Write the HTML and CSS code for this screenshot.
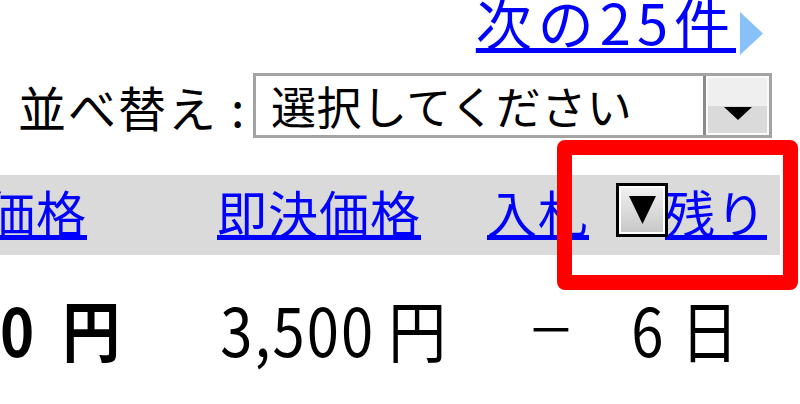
FILE: index.html
```html
<!DOCTYPE html>
<html lang="ja">
<head>
<meta charset="utf-8">
<title>検索結果</title>
<link rel="stylesheet" href="styles.css">
</head>
<body>
<div class="page">
  <div class="pager">
    <a class="next" href="#">次の25件</a>
    <svg class="next-tri" width="23" height="43" viewBox="0 0 23 43"><polygon points="0,0 23,21.5 0,43" fill="#88c0fa"/></svg>
  </div>
  <div class="sort">
    <span class="sort-label">並べ替え<span class="colon">:</span></span>
    <div class="select">
      <span class="select-text">選択してください</span>
      <span class="select-btn"><svg width="28" height="13" viewBox="0 0 28 13"><polygon points="0,0 28,0 14,13" fill="#000"/></svg></span>
    </div>
  </div>
  <div class="thead">
    <a class="h h1" href="#">価格</a>
    <a class="h h2" href="#">即決価格</a>
    <a class="h h3" href="#">入札</a>
    <a class="h h4" href="#">残り</a>
  </div>
  <div class="trow">
    <span class="d d1"><b>0</b><b class="unit u1">円</b></span>
    <span class="d d2"><span class="num">3,500</span><span class="unit u2">円</span></span>
    <span class="d d3"><span class="dash">–</span></span>
    <span class="d d4">6<span class="unit u4">日</span></span>
  </div>
  <div class="sort-btn"><svg width="27" height="28" viewBox="0 0 27 28"><polygon points="0,0 27,0 13.5,28" fill="#000"/></svg></div>
  <div class="highlight"></div>
</div>
</body>
</html>
```

FILE: styles.css
```css
* { box-sizing: border-box; }
html, body { margin: 0; padding: 0; }
body {
  width: 800px;
  height: 404px;
  overflow: hidden;
  background: #fff;
  color: #000;
  font-family: "Noto Sans CJK JP", "Noto Sans", sans-serif;
}
.page {
  position: relative;
  width: 800px;
  height: 404px;
  overflow: hidden;
}

/* pager */
.pager {
  display: flex;
  justify-content: flex-end;
  align-items: flex-start;
  height: 60px;
  padding-right: 37px;
}
.next {
  font-size: 56px;
  line-height: 56px;
  letter-spacing: 6px;
  color: #0000ff;
  text-decoration: underline;
  text-underline-offset: 3px;
  margin-top: -7px;
}
.next-tri {
  margin-left: 4px;
  margin-top: 12px;
}

/* sort */
.sort {
  display: flex;
  align-items: center;
  height: 65px;
  margin-top: 13px;
  padding-left: 18px;
}
.sort-label {
  font-size: 48px;
  letter-spacing: 2px;
  width: 235px;
  line-height: 1;
  white-space: nowrap;
}
.colon {
  margin-left: 13px;
}
.select {
  display: flex;
  align-items: center;
  justify-content: space-between;
  width: 519px;
  height: 65px;
  border: 3px solid #a3a3a3;
  background: #fff;
}
.select-text {
  font-size: 45px;
  line-height: 1;
  letter-spacing: 0.5px;
  padding-left: 15px;
  white-space: nowrap;
}
.select-btn {
  align-self: stretch;
  width: 66px;
  border-left: 3px solid #8a8a8a;
  background: linear-gradient(#efefef 0, #efefef 50%, #dadada 50%, #dadada 100%);
  box-shadow: inset 0 0 0 2px #fafafa;
  display: flex;
  justify-content: center;
  align-items: flex-end;
  padding-bottom: 15px;
}

/* header */
.thead {
  display: flex;
  align-items: center;
  width: 780px;
  height: 80px;
  margin-top: 37px;
  padding-bottom: 8px;
  background: #dadada;
}
.h {
  font-size: 50px;
  line-height: 1;
  letter-spacing: 1px;
  color: #0000ff;
  text-decoration: underline;
  text-underline-offset: 2px;
  white-space: nowrap;
}
.h1 { margin-left: -15px; }
.h2 { margin-left: 130px; }
.h3 { margin-left: 66px; }
.h4 { margin-left: 76px; }

/* data row */
.trow {
  display: flex;
  align-items: baseline;
  height: 110px;
  padding-top: 37px;
  font-size: 58px;
  line-height: 1;
  white-space: nowrap;
}
.d {
  display: inline-block;
  transform: scaleY(1.15);
  transform-origin: 0 100%;
}
.d1 b { font-weight: 700; }
.u1 { margin-left: 28px; }
.d2 { margin-left: 100px; }
.num { letter-spacing: 2px; }
.u2 { margin-left: 13px; }
.d3 { margin-left: 84px; transform: scale(1.35, 1); }
.dash { vertical-align: 12px; }
.d4 { margin-left: 70px; }
.u4 { margin-left: 17px; }

/* overlays */
.sort-btn {
  position: absolute;
  left: 616px;
  top: 183px;
  width: 52px;
  height: 54px;
  border: 3px solid #000;
  box-shadow: inset 0 0 0 2px #fff;
  background: linear-gradient(#f2f2f2, #c6c6c6);
  display: flex;
  justify-content: center;
  align-items: center;
}
.highlight {
  position: absolute;
  left: 557px;
  top: 140px;
  width: 241px;
  height: 150px;
  border: 15px solid #ff0000;
  border-radius: 8px;
}
```
